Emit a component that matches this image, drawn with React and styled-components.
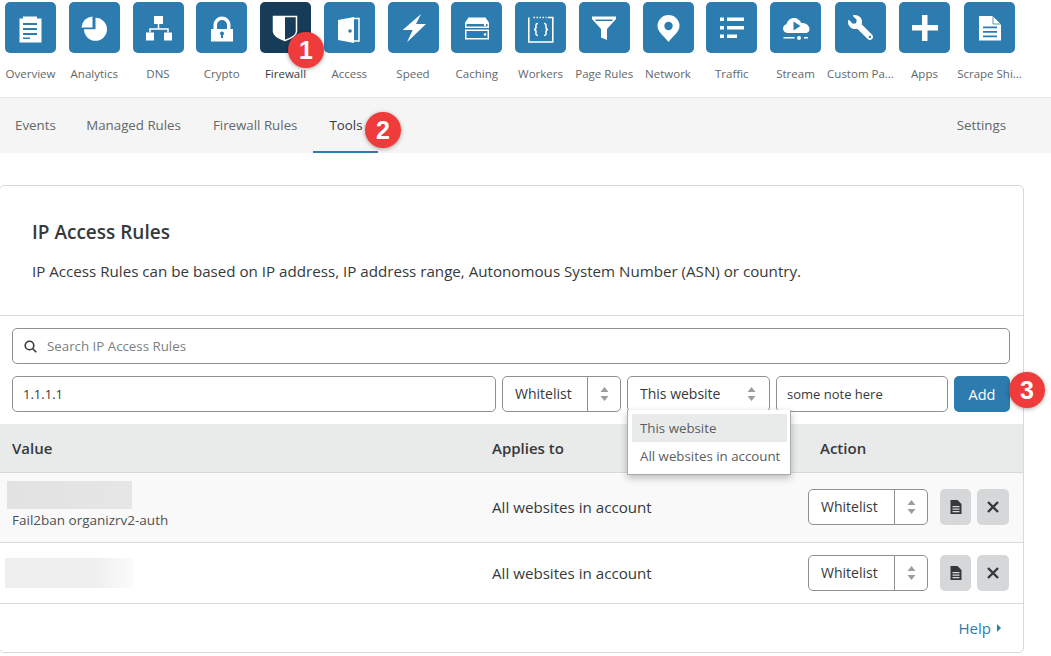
import React from 'react'
import styled, { createGlobalStyle } from 'styled-components'
import { FaWrench } from 'react-icons/fa'

const Global = createGlobalStyle`
  html, body { margin: 0; padding: 0; background: #fff; }
  body {
    font-family: "Open Sans", "Liberation Sans", sans-serif;
    color: #36393a;
    width: 1051px;
    height: 656px;
    overflow: hidden;
  }
`

const Page = styled.div`
  position: relative;
  width: 1051px;
  height: 656px;
  overflow: hidden;
`

const IconBar = styled.nav`
  display: grid;
  grid-template-columns: repeat(12, 63.75px) 65px 64px 65px 64px;
  height: 97px;
  padding-top: 2px;
  box-sizing: border-box;
`

const IconItem = styled.div`
  display: flex;
  flex-direction: column;
  align-items: center;
  width: 61px;
`

const Tile = styled.div`
  width: 51px;
  height: 51px;
  flex: none;
  border-radius: 5px;
  background: ${(p) => (p.$active ? '#163c59' : '#2c7cb0')};
  color: #fff;
  display: flex;
  align-items: center;
  justify-content: center;
  svg { display: block; }
`

const IconLabel = styled.div`
  margin-top: 13px;
  font-size: 11.5px;
  line-height: 16px;
  color: ${(p) => (p.$active ? '#36393a' : '#62676a')};
  white-space: nowrap;
  text-align: center;
  flex: none;
`

const TabBar = styled.div`
  display: flex;
  align-items: stretch;
  justify-content: space-between;
  height: 56px;
  box-sizing: border-box;
  background: #f5f5f5;
  border-top: 1px solid #e6e6e6;
`

const TabGroup = styled.div`
  display: flex;
`

const Tab = styled.a`
  display: flex;
  align-items: center;
  padding: 0 16px;
  padding-right: ${(p) => (p.$first ? '14.5px' : '16px')};
  margin-right: ${(p) => (p.$end ? '29px' : '0')};
  margin-left: ${(p) => (p.$first ? '-1px' : '0')};
  font-size: 13.3px;
  color: ${(p) => (p.$active ? '#36393a' : '#62676a')};
  border-bottom: 2px solid ${(p) => (p.$active ? '#2c7cb0' : 'transparent')};
`

const Card = styled.section`
  margin: 32px 27px 0 -1px;
  height: 468px;
  box-sizing: border-box;
  border: 1px solid #d9d9d9;
  border-radius: 5px;
  display: flex;
  flex-direction: column;
`

const Intro = styled.div`
  padding: 33px 32px 0;
  height: 130px;
  box-sizing: border-box;
  border-bottom: 1px solid #d9d9d9;
`

const Title = styled.h2`
  margin: 0;
  font-size: 19px;
  line-height: 26px;
  font-weight: 600;
  color: #36393a;
`

const Lead = styled.p`
  margin: 14px 0 0;
  font-size: 15.15px;
  line-height: 24px;
  color: #36393a;
  white-space: nowrap;
`

const Controls = styled.div`
  padding: 12px 13px 12px 12px;
  display: flex;
  flex-direction: column;
  gap: 12px;
`

const Field = styled.div`
  box-sizing: border-box;
  height: 36px;
  border: 1px solid #8d9193;
  border-radius: 5px;
  background: #fff;
  display: flex;
  align-items: center;
  padding: 0 10px;
  font-size: ${(p) => (p.$muted ? '13.3px' : '13px')};
  width: ${(p) => p.$width || 'auto'};
  flex: ${(p) => (p.$grow ? '1' : 'none')};
  color: ${(p) => (p.$muted ? '#7a7f82' : '#36393a')};
`

const SearchIcon = styled.svg`
  margin: 0 10px 0 1px;
  flex: none;
`

const FormRow = styled.div`
  display: flex;
  gap: 6px;
`

const SelectBox = styled.div`
  position: relative;
  box-sizing: border-box;
  height: 36px;
  width: ${(p) => p.$width};
  flex: none;
  border: 1px solid #8d9193;
  border-radius: 5px;
  background: #fff;
  display: flex;
  align-items: center;
  font-size: 14px;
  color: #36393a;
`

const SelectValue = styled.div`
  flex: 1;
  padding-left: 12px;
  line-height: 34px;
`

const SelectArrows = styled.div`
  width: ${(p) => (p.$divider ? '32px' : '36px')};
  height: 34px;
  border-left: ${(p) => (p.$divider ? '1px solid #8d9193' : '0')};
  display: flex;
  align-items: center;
  justify-content: center;
`

const Menu = styled.div`
  position: absolute;
  z-index: 3;
  top: 33px;
  left: -1px;
  width: 164px;
  box-sizing: border-box;
  padding: 4px 3px 4px 4px;
  background: #fff;
  border: 1px solid #a9acae;
  border-top: 0;
  box-shadow: 0 3px 7px rgba(0, 0, 0, 0.25);
`

const MenuItem = styled.div`
  height: 28px;
  line-height: 28px;
  padding-left: 8px;
  font-size: 13.3px;
  color: #5a5e60;
  white-space: nowrap;
  background: ${(p) => (p.$selected ? '#e9eaea' : 'transparent')};
`

const AddButton = styled.button`
  width: 56px;
  height: 36px;
  border: 0;
  border-radius: 5px;
  background: #2c7cb0;
  color: #fff;
  font-family: inherit;
  font-size: 14.5px;
  padding: 0;
`

const TableRow = styled.div`
  display: grid;
  grid-template-columns: 479px 328px 1fr;
  align-items: center;
  box-sizing: border-box;
  height: ${(p) => p.$height};
  padding-bottom: ${(p) => p.$bottom || '0'};
  background: ${(p) => p.$bg || '#fff'};
  border-bottom: 1px solid #d9d9d9;
`

const HeadCell = styled.div`
  font-size: 15px;
  font-weight: 600;
  color: #36393a;
  padding-left: ${(p) => p.$pad || '0'};
`

const Cell = styled.div`
  font-size: 15.15px;
  color: #36393a;
  padding-left: 13px;
`

const ValueCell = styled.div`
  padding-left: ${(p) => p.$pad};
`

const Redacted = styled.div`
  width: ${(p) => p.$width};
  height: ${(p) => p.$height};
  background: ${(p) => (p.$fade
    ? 'linear-gradient(90deg, #efefef 0%, #efefef 70%, #fbfbfb 100%)'
    : 'linear-gradient(90deg, #e2e2e2, #e6e6e6)')};
`

const Note = styled.div`
  margin: 2px 0 0 5px;
  padding-bottom: 4px;
  font-size: 13.5px;
  line-height: 18px;
  color: #4d5153;
`

const ActionCell = styled.div`
  display: flex;
  align-items: center;
  margin-left: 1px;
`

const SquareButton = styled.div`
  width: ${(p) => p.$width};
  height: 36px;
  margin-left: ${(p) => p.$gap};
  border-radius: 5px;
  background: #d5d7d8;
  display: flex;
  align-items: center;
  justify-content: center;
`

const Footer = styled.div`
  flex: 1;
  display: flex;
  align-items: center;
  justify-content: flex-end;
  padding: 0 22px 0 0;
`

const HelpLink = styled.a`
  font-size: 15px;
  color: #2c7cb0;
  display: flex;
  align-items: center;
  gap: 6px;
`

const Badge = styled.div`
  position: absolute;
  z-index: 5;
  left: ${(p) => p.$x - 18}px;
  top: ${(p) => p.$y - 18}px;
  width: 36px;
  height: 36px;
  border-radius: 50%;
  background: #ef3b3b;
  box-shadow: 0 1px 4px rgba(0, 0, 0, 0.35);
  color: #fff;
  font-family: "Liberation Sans", Arial, sans-serif;
  font-weight: 700;
  font-size: 25px;
  line-height: 36px;
  text-align: center;
`

const B = '#2c7cb0'

const Svg = ({ children }) => (
  <svg width="51" height="51" viewBox="0 0 51 51" fill="#fff">{children}</svg>
)

const icons = {
  overview: (
    <Svg>
      <path d="M18 14.500h14v2h4.500v24h-22v-24H18z" />
      <path d="M18 21h14v2H18zM18 26h14v2H18zM18 31h14v2H18zM18 35.500h7v1.500h-7z" fill={B} />
    </Svg>
  ),
  analytics: (
    <Svg>
      <path d="M26.500 15.800a11.500 11.500 0 1 1-11.500 11.500h11.500z" />
      <path d="M12.500 25.500a11.500 11.500 0 0 1 11-11v11z" />
    </Svg>
  ),
  dns: (
    <Svg>
      <path d="M21 14h9v8h-9zM13 30.500h8v8h-8zM31 30.500h8v8h-8z" />
      <path d="M25.500 22v4.500M17 30.500V27h18v3.500" fill="none" stroke="#fff" strokeWidth="1.500" />
    </Svg>
  ),
  crypto: (
    <Svg>
      <path d="M15 27h2.500v-4a8.500 8.500 0 0 1 17 0v4H37v12.500H15zM21 27h10v-4a5 5 0 0 0-10 0z" fillRule="evenodd" />
      <circle cx="26" cy="31.500" r="2" fill={B} />
      <path d="M25 32h2v4h-2z" fill={B} />
    </Svg>
  ),
  firewall: (
    <Svg>
      <path d="M13.500 14.500h23v15c0 4-6 7-11.500 9-5.500-2-11.500-5-11.500-9z" fill="none" stroke="#fff" strokeWidth="1.500" />
      <path d="M13.500 14.500h11.500v24c-5.500-2-11.500-5-11.500-9z" />
    </Svg>
  ),
  access: (
    <Svg>
      <path d="M14 18l16-3v26l-16-3z" />
      <path d="M30 16.500h5v22.500h-5" fill="none" stroke="#fff" strokeWidth="1.500" />
      <circle cx="26" cy="29" r="1.800" fill={B} />
    </Svg>
  ),
  speed: (
    <Svg>
      <path d="M33 12L14.700 28h10L19 40.300 38 22H28z" />
    </Svg>
  ),
  caching: (
    <Svg>
      <path d="M17.500 15.500h17l3.500 5v5.500H14v-5.500z" />
      <path d="M14 27.500h24v10H14z" />
      <path d="M15.500 22h21v2.500h-21zM15.500 29h21v7h-21z" fill={B} />
      <circle cx="34" cy="23" r="1.200" />
      <circle cx="34" cy="32.500" r="1.200" />
    </Svg>
  ),
  workers: (
    <Svg>
      <path d="M13.800 15.500v24.500h24V15.500h-5" fill="none" stroke="#fff" strokeWidth="1.600" />
      <path d="M18.500 15.500h13" stroke="#fff" strokeWidth="1.600" strokeDasharray="1.500 1.500" />
      <path d="M23 21.500c-2.500 0-2 1.500-2 3.500s-.5 2.500-2 2.500c1.500 0 2 .5 2 2.500s-.5 3.500 2 3.500M29 21.500c2.500 0 2 1.500 2 3.500s.5 2.500 2 2.500c-1.500 0-2 .5-2 2.500s.5 3.500-2 3.500" fill="none" stroke="#fff" strokeWidth="1.500" />
    </Svg>
  ),
  pagerules: (
    <Svg>
      <path d="M13 14.500h24v2.500l-9 10v11l-6-2.500v-8.500l-9-10z" />
      <path d="M16.500 17.500h17v1.500h-17z" fill={B} />
    </Svg>
  ),
  network: (
    <Svg>
      <path d="M25.500 13a11 11 0 0 1 11 11c0 6-7 10.500-11 16-4-5.500-11-10-11-16a11 11 0 0 1 11-11z" />
      <circle cx="25.500" cy="24" r="4.200" fill={B} />
    </Svg>
  ),
  traffic: (
    <Svg>
      <path d="M14 15.500h4v3.500h-4zM21 15.500h17v3.500H21zM14 24h4v3.500h-4zM21 24h17v3.500H21zM14 32.500h4v3.500h-4zM21 32.500h10v3.500H21z" />
    </Svg>
  ),
  stream: (
    <Svg>
      <path d="M18 31c-3 0-5-2-5-4.500 0-2.200 1.500-4 3.500-4.300 .8-3.600 4-6.200 7.600-6.200 3.200 0 6 2 7.200 5 .4 0 .7-.1 1.200-.1 3.700 0 7 2.800 7 6s-2.500 4.100-5 4.100z" />
      <path d="M23.500 19.500l7 4.500-7 4.500z" fill={B} />
      <circle cx="29" cy="36" r="2" />
      <path d="M13.500 35h11v1.500h-11zM34 35h4v1.500h-4z" />
    </Svg>
  ),
  wrench: <FaWrench size={25} style={{ transform: 'scaleX(-1)' }} />,
  apps: (
    <Svg>
      <path d="M23 13h5.500v10h10.500v5.500H28.500V39H23V28.500H13V23h10z" />
    </Svg>
  ),
  scrape: (
    <Svg>
      <path d="M15 14h14l8 8v16.500H15z" />
      <path d="M29 14v8h8z" fill="#fff" stroke={B} strokeWidth="0.800" />
      <path d="M19 24.500h14v1.800H19zM19 29h14v1.800H19zM19 33.500h14v1.800H19z" fill={B} />
    </Svg>
  ),
}

const navItems = [
  ['overview', 'Overview'],
  ['analytics', 'Analytics'],
  ['dns', 'DNS'],
  ['crypto', 'Crypto'],
  ['firewall', 'Firewall'],
  ['access', 'Access'],
  ['speed', 'Speed'],
  ['caching', 'Caching'],
  ['workers', 'Workers'],
  ['pagerules', 'Page Rules'],
  ['network', 'Network'],
  ['traffic', 'Traffic'],
  ['stream', 'Stream'],
  ['wrench', 'Custom Pa...'],
  ['apps', 'Apps'],
  ['scrape', 'Scrape Shi...'],
]

const Arrows = () => (
  <svg width="9" height="14" viewBox="0 0 9 14" fill="#9a9ea0">
    <path d="M4.500 0L8.500 5H.5zM4.500 14L.5 9h8z" />
  </svg>
)

const Select = ({ value, width, divider = true, children }) => (
  <SelectBox $width={width}>
    <SelectValue>{value}</SelectValue>
    <SelectArrows $divider={divider}><Arrows /></SelectArrows>
    {children}
  </SelectBox>
)

const DocIcon = () => (
  <svg width="12" height="14" viewBox="0 0 12 14" fill="#36393a">
    <path d="M.5 0h7L11.500 4v10H.5zM2.500 6v1.300h7V6zM2.500 8.500v1.300h7V8.500zM2.500 11v1.300h7V11z" fillRule="evenodd" />
  </svg>
)

const CloseIcon = () => (
  <svg width="12" height="12" viewBox="0 0 12 12">
    <path d="M1 1l10 10M11 1L1 11" stroke="#36393a" strokeWidth="2.400" fill="none" />
  </svg>
)

const RowActions = () => (
  <ActionCell>
    <Select value="Whitelist" width="120px" />
    <SquareButton $width="31px" $gap="12px"><DocIcon /></SquareButton>
    <SquareButton $width="32px" $gap="6px"><CloseIcon /></SquareButton>
  </ActionCell>
)

export default function App() {
  return (
    <Page>
      <Global />
      <IconBar>
        {navItems.map(([key, label]) => (
          <IconItem key={key}>
            <Tile $active={key === 'firewall'}>{icons[key]}</Tile>
            <IconLabel $active={key === 'firewall'}>{label}</IconLabel>
          </IconItem>
        ))}
      </IconBar>

      <TabBar>
        <TabGroup>
          <Tab $first>Events</Tab>
          <Tab>Managed Rules</Tab>
          <Tab>Firewall Rules</Tab>
          <Tab $active>Tools</Tab>
        </TabGroup>
        <Tab $end>Settings</Tab>
      </TabBar>

      <Card>
        <Intro>
          <Title>IP Access Rules</Title>
          <Lead>IP Access Rules can be based on IP address, IP address range, Autonomous System Number (ASN) or country.</Lead>
        </Intro>

        <Controls>
          <Field $muted>
            <SearchIcon width="13" height="13" viewBox="0 0 13 13" fill="none" stroke="#36393a" strokeWidth="1.600">
              <circle cx="5.500" cy="5.500" r="4.300" />
              <path d="M8.700 8.700l3.600 3.600" />
            </SearchIcon>
            Search IP Access Rules
          </Field>
          <FormRow>
            <Field $grow>1.1.1.1</Field>
            <Select value="Whitelist" width="119px" />
            <Select value="This website" width="143px" divider={false}>
              <Menu>
                <MenuItem $selected>This website</MenuItem>
                <MenuItem>All websites in account</MenuItem>
              </Menu>
            </Select>
            <Field $width="172px">some note here</Field>
            <AddButton>Add</AddButton>
          </FormRow>
        </Controls>

        <TableRow $height="49px" $bg="#e9eaea">
          <HeadCell $pad="12px">Value</HeadCell>
          <HeadCell $pad="13px">Applies to</HeadCell>
          <HeadCell $pad="13px">Action</HeadCell>
        </TableRow>
        <TableRow $height="70px" $bg="#f9f9f9" $bottom="1px">
          <ValueCell $pad="7px">
            <Redacted $width="125px" $height="28px" />
            <Note>Fail2ban organizrv2-auth</Note>
          </ValueCell>
          <Cell>All websites in account</Cell>
          <RowActions />
        </TableRow>
        <TableRow $height="61px">
          <ValueCell $pad="5px">
            <Redacted $width="128px" $height="30px" $fade />
          </ValueCell>
          <Cell>All websites in account</Cell>
          <RowActions />
        </TableRow>

        <Footer>
          <HelpLink>
            Help
            <svg width="4" height="8" viewBox="0 0 4 8" fill="#2c7cb0"><path d="M0 0l4 4-4 4z" /></svg>
          </HelpLink>
        </Footer>
      </Card>

      <Badge $x={306} $y={50}>1</Badge>
      <Badge $x={383} $y={130}>2</Badge>
      <Badge $x={1027} $y={390}>3</Badge>
    </Page>
  )
}
